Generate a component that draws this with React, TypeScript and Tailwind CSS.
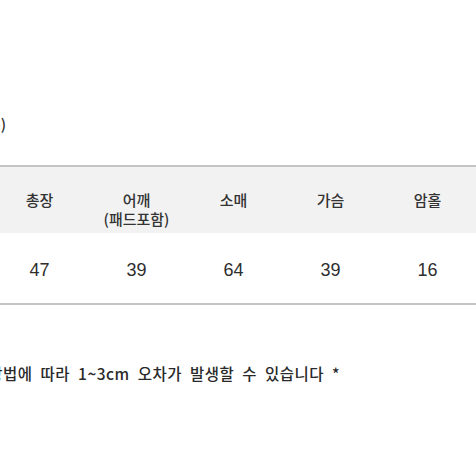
const headers = [
  { label: "총장" },
  { label: "어깨", sub: "(패드포함)" },
  { label: "소매" },
  { label: "가슴" },
  { label: "암홀" },
];

const values = ["47", "39", "64", "39", "16"];

export default function App() {
  return (
    <div
      className="w-[476px] h-[476px] overflow-hidden bg-white text-[#2e2e2e]"
      style={{ fontFamily: '"Noto Sans CJK KR", "Noto Sans", sans-serif' }}
    >
      <div className="h-[114px]" />
      {/* unit caption, cropped at the left edge */}
      <div className="flex justify-end w-[6px] whitespace-nowrap">
        <span className="text-[15px] leading-[20px] font-medium">(단위: cm)</span>
      </div>
      <div className="h-[31px]" />

      {/* size table */}
      <div className="-ml-[9px] w-[485px] border-t-2 border-b-2 border-[#c4c4c4]">
        <div className="grid grid-cols-5 h-[66px] bg-[#f2f2f2]">
          {headers.map((h) => (
            <div key={h.label} className="relative flex justify-center pt-[23px]">
              <span className="text-[15px] leading-[20px] font-medium text-[#333]">{h.label}</span>
              {h.sub && (
                <span className="absolute top-[42px] text-[15px] leading-[20px] font-medium text-[#333]">
                  {h.sub}
                </span>
              )}
            </div>
          ))}
        </div>
        <div className="grid grid-cols-5 h-[70px] items-center bg-white">
          {values.map((v, i) => (
            <div
              key={i}
              className="text-center text-[18px] pt-[4px] text-[#2e2e2e]"
              style={{ fontFamily: '"Liberation Sans", Arial, sans-serif' }}
            >
              {v}
            </div>
          ))}
        </div>
      </div>

      <div className="h-[57px]" />
      {/* disclaimer, cropped at the left edge */}
      <div className="flex justify-end w-[340px] whitespace-nowrap">
        <span className="text-[15.5px] leading-[22px] font-medium tracking-[0.5px] [word-spacing:4px] text-[#2a2a2a]">
          * 측정 방법에 따라 1~3cm 오차가 발생할 수 있습니다 *
        </span>
      </div>
    </div>
  );
}
